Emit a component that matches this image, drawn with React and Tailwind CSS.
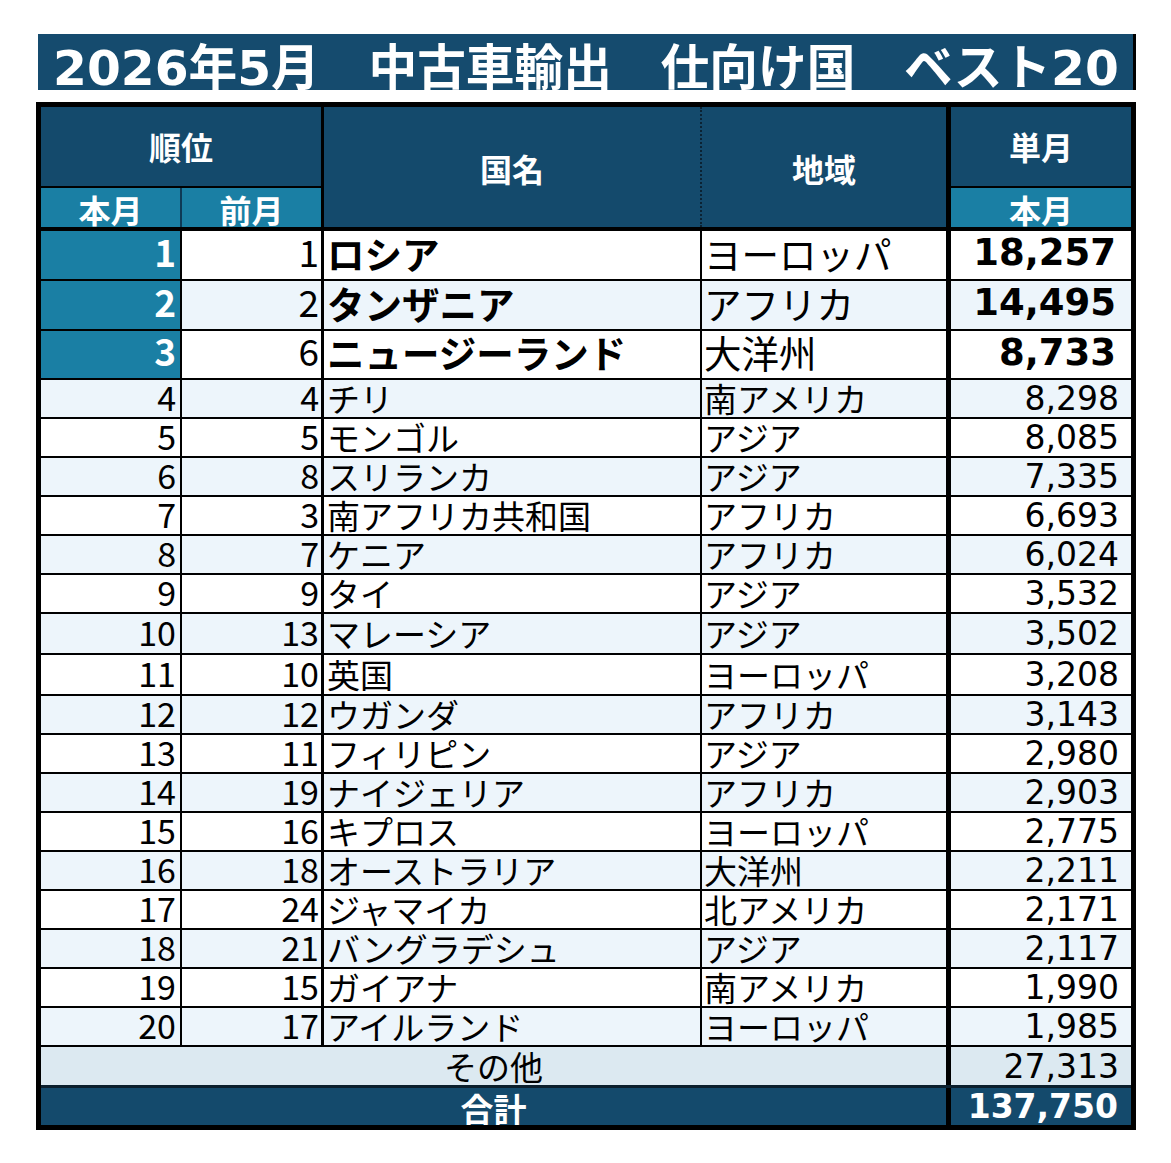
import React from "react";

const rows = [
  [1, 1, "ロシア", "ヨーロッパ", "18,257"],
  [2, 2, "タンザニア", "アフリカ", "14,495"],
  [3, 6, "ニュージーランド", "大洋州", "8,733"],
  [4, 4, "チリ", "南アメリカ", "8,298"],
  [5, 5, "モンゴル", "アジア", "8,085"],
  [6, 8, "スリランカ", "アジア", "7,335"],
  [7, 3, "南アフリカ共和国", "アフリカ", "6,693"],
  [8, 7, "ケニア", "アフリカ", "6,024"],
  [9, 9, "タイ", "アジア", "3,532"],
  [10, 13, "マレーシア", "アジア", "3,502"],
  [11, 10, "英国", "ヨーロッパ", "3,208"],
  [12, 12, "ウガンダ", "アフリカ", "3,143"],
  [13, 11, "フィリピン", "アジア", "2,980"],
  [14, 19, "ナイジェリア", "アフリカ", "2,903"],
  [15, 16, "キプロス", "ヨーロッパ", "2,775"],
  [16, 18, "オーストラリア", "大洋州", "2,211"],
  [17, 24, "ジャマイカ", "北アメリカ", "2,171"],
  [18, 21, "バングラデシュ", "アジア", "2,117"],
  [19, 15, "ガイアナ", "南アメリカ", "1,990"],
  [20, 17, "アイルランド", "ヨーロッパ", "1,985"],
];

function heightClass(i) {
  if (i === 0 || i === 1) return "h-[50px]";
  if (i === 2) return "h-[49px]";
  if (i === 9 || i === 10) return "h-[41px]";
  return "h-[39px]";
}

function Row({ r, i }) {
  const top = i < 3;
  const stripe = i % 2 === 1 ? "bg-[#edf5fb]" : "bg-white";
  return (
    <div className={`flex border-b-2 border-black ${heightClass(i)} ${stripe}`}>
      <div
        className={`w-[141px] shrink-0 border-r-2 border-black flex items-center justify-end pr-[4px] ${
          top ? "bg-[#1a7fa4] text-white font-bold text-[37px] pb-[8px]" : "text-[34px] pb-[3px]"
        }`}
      >
        {r[0]}
      </div>
      <div
        className={`w-[142px] shrink-0 border-r-[3px] border-black flex items-center justify-end pr-[2px] ${
          top ? "text-[37px] pb-[8px]" : "text-[34px] pb-[3px]"
        }`}
      >
        {r[1]}
      </div>
      <div
        className={`w-[378px] shrink-0 border-r-2 border-black flex items-center pl-[3px] whitespace-nowrap overflow-hidden ${
          top ? "text-[37.5px] font-bold pb-[5px]" : "text-[33px] pb-[1px]"
        }`}
      >
        {r[2]}
      </div>
      <div
        className={`w-[249px] shrink-0 border-r-[5px] border-black flex items-center pl-[2px] whitespace-nowrap overflow-hidden ${
          top ? "text-[37.5px] pb-[5px]" : "text-[33px] pb-[1px]"
        }`}
      >
        {r[3]}
      </div>
      <div
        className={`flex-1 flex items-center justify-end font-['DejaVu_Sans',sans-serif] ${
          top ? "text-[37px] font-bold pr-[15px] pb-[5px]" : "text-[33px] pr-[12px]"
        }`}
      >
        {r[4]}
      </div>
    </div>
  );
}

export default function App() {
  return (
    <div className="w-[1171px] h-[1163px] bg-white pt-[34px] pl-[36px] font-['Noto_Sans_CJK_JP',sans-serif] text-black leading-none">
      <div className="ml-[2px] w-[1098px] h-[56px] bg-[#154b6e] border-r-[3px] border-black overflow-hidden pl-[15px] text-white font-bold text-[48.7px] leading-[68px] whitespace-nowrap font-['DejaVu_Sans','Noto_Sans_CJK_JP',sans-serif]">
        2026年5月　中古車輸出　仕向け国　ベスト20
      </div>

      <div className="mt-[12px] w-[1100px] border-[5px] border-black">
        {/* header */}
        <div className="flex border-b-4 border-black text-white font-bold text-[32px]">
          <div className="w-[283px] shrink-0 border-r-[3px] border-black flex flex-col">
            <div className="h-[81px] bg-[#144a6c] border-b-2 border-black flex items-center justify-center pb-[2px]">
              順位
            </div>
            <div className="h-[39px] flex bg-[#1a7fa4]">
              <div className="w-[141px] shrink-0 border-r-2 border-[#0e3a56] flex items-center justify-center pt-[2px]">
                本月
              </div>
              <div className="flex-1 flex items-center justify-center pt-[2px]">前月</div>
            </div>
          </div>
          <div className="w-[378px] shrink-0 h-[120px] bg-[#144a6c] border-r-2 border-dotted border-[#0b2233] flex items-center justify-center pt-[2px]">
            国名
          </div>
          <div className="w-[249px] shrink-0 h-[120px] bg-[#144a6c] border-r-[5px] border-black flex items-center justify-center pt-[2px]">
            地域
          </div>
          <div className="flex-1 flex flex-col">
            <div className="h-[81px] bg-[#144a6c] border-b-2 border-black flex items-center justify-center pb-[2px]">
              単月
            </div>
            <div className="h-[39px] bg-[#1a7fa4] flex items-center justify-center pt-[2px]">本月</div>
          </div>
        </div>

        {/* body */}
        {rows.map((r, i) => (
          <Row key={i} r={r} i={i} />
        ))}

        {/* other */}
        <div className="flex h-[41px] bg-[#dce9f1] border-b-[3px] border-[#0b1f2d]">
          <div className="w-[910px] shrink-0 border-r-[5px] border-black flex items-center justify-center text-[33px]">
            その他
          </div>
          <div className="flex-1 flex items-center justify-end pr-[12px] text-[33px] font-['DejaVu_Sans',sans-serif]">
            27,313
          </div>
        </div>
        <div className="flex h-[37px] bg-[#144a6c] text-white font-bold overflow-hidden">
          <div className="w-[910px] shrink-0 border-r-[5px] border-black flex items-center justify-center text-[33px] pt-[4px]">
            合計
          </div>
          <div className="flex-1 flex items-center justify-end pr-[13px] text-[33px] font-['DejaVu_Sans',sans-serif]">
            137,750
          </div>
        </div>
      </div>
    </div>
  );
}
